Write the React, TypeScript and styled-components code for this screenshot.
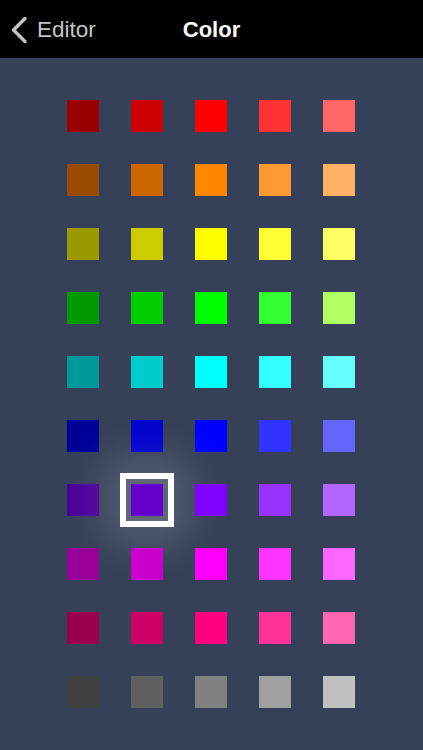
import React, { useState } from 'react';
import styled, { createGlobalStyle } from 'styled-components';

const GlobalStyle = createGlobalStyle`
	html, body {
		margin: 0;
		padding: 0;
		background: #364159;
		font-family: 'Liberation Sans', Arial, sans-serif;
	}
`;

const palette: string[][] = [
	['#990000', '#cc0000', '#ff0000', '#ff3333', '#ff6666'],
	['#994c00', '#cc6600', '#ff8800', '#ff9933', '#ffb266'],
	['#999900', '#cccc00', '#ffff00', '#ffff33', '#ffff66'],
	['#009900', '#00cc00', '#00ff00', '#33ff33', '#b2ff66'],
	['#009999', '#00cccc', '#00ffff', '#33ffff', '#66ffff'],
	['#000099', '#0000cc', '#0000ff', '#3333ff', '#6666ff'],
	['#4c0099', '#6600cc', '#8000ff', '#9933ff', '#b266ff'],
	['#990099', '#cc00cc', '#ff00ff', '#ff33ff', '#ff66ff'],
	['#990050', '#cc0066', '#ff0080', '#ff3399', '#ff66b2'],
	['#404040', '#606060', '#808080', '#a0a0a0', '#c0c0c0']
];

const Page = styled.div`
	width: 100%;
	min-height: 750px;
	background: #364159;
	display: flex;
	flex-direction: column;
`;

const NavBar = styled.div`
	height: 58px;
	background: #000;
	display: flex;
	align-items: center;
	position: relative;
	flex-shrink: 0;
`;

const BackButton = styled.div`
	display: flex;
	align-items: center;
	gap: 9px;
	padding-left: 10px;
	color: #c4c4c4;
	font-size: 22.5px;
	cursor: pointer;
	margin-top: 2px;
`;

const Title = styled.div`
	position: absolute;
	left: 0;
	right: 0;
	top: 0;
	bottom: 0;
	display: flex;
	align-items: center;
	justify-content: center;
	color: #fff;
	font-size: 22px;
	font-weight: bold;
	pointer-events: none;
	padding-top: 2px;
`;

const Grid = styled.div`
	display: grid;
	grid-template-columns: repeat(5, 32px);
	grid-auto-rows: 32px;
	gap: 32px;
	justify-content: center;
	padding-top: 42px;
	margin-left: -1px;
`;

const Cell = styled.div`
	position: relative;
	width: 32px;
	height: 32px;
`;

const Swatch = styled.div<{ $color: string }>`
	width: 32px;
	height: 32px;
	background: ${p => p.$color};
	cursor: pointer;
`;

const Selection = styled.div`
	position: absolute;
	left: -11px;
	top: -11px;
	width: 42px;
	height: 42px;
	border: 6px solid #fff;
	background: #5f6878;
	box-shadow: 0 0 38px 16px rgba(255, 255, 255, 0.15);
	pointer-events: none;
`;

const SelectedSwatch = styled(Swatch)`
	position: absolute;
	left: 0;
	top: 0;
`;

const App: React.FC = () => {
	const [selected, setSelected] = useState<[number, number]>([6, 1]);

	return (
		<Page>
			<GlobalStyle />
			<NavBar>
				<BackButton>
					<svg width="18" height="28" viewBox="0 0 18 28" style={{ marginTop: -1 }}>
						<polyline
							points="15,2.5 3.5,14 15,25.5"
							fill="none"
							stroke="#c4c4c4"
							strokeWidth="3.4"
							strokeLinecap="round"
							strokeLinejoin="round"
						/>
					</svg>
					<span>Editor</span>
				</BackButton>
				<Title>Color</Title>
			</NavBar>
			<Grid>
				{palette.map((row, r) =>
					row.map((color, c) => {
						const isSel = selected[0] === r && selected[1] === c;
						return (
							<Cell key={`${r}-${c}`} onClick={() => setSelected([r, c])}>
								{isSel && <Selection />}
								{isSel ? <SelectedSwatch $color={color} /> : <Swatch $color={color} />}
							</Cell>
						);
					})
				)}
			</Grid>
		</Page>
	);
};

export default App;
